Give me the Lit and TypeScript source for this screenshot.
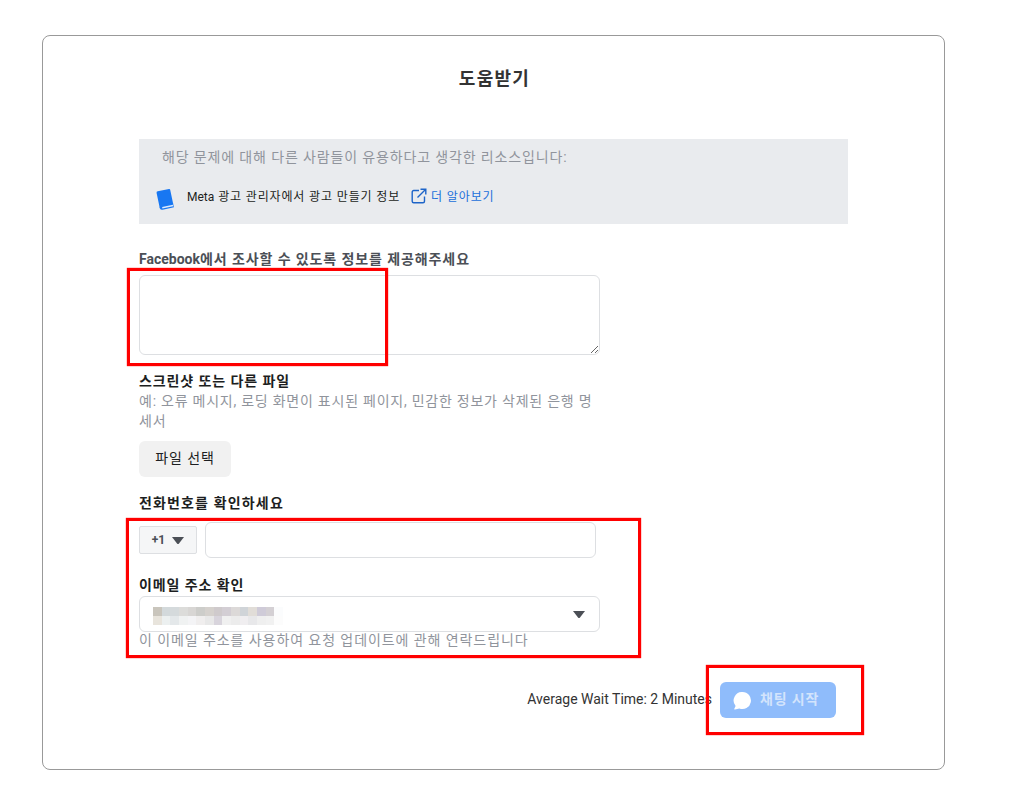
import { LitElement, html, css } from "lit";
import { customElement } from "lit/decorators.js";

const ROW1 = ["#c9c5bc","#d3d9db","#d5dadc","#dcdcda","#d8d6d4","#cdcdca","#d5d1cd","#cfcacc","#d3ced4","#dcd9d8","#d0d4d8","#e1ddd8","#cfcbd8","#d4d0d4","#fbfcfd"];
const ROW2 = ["#e8e4dc","#ecf0f0","#e4e8ea","#f0f2f2","#f4f4f6","#f0eeee","#e8e8e8","#d8d4dc","#f0f0f0","#ececec","#f0eef0","#e8e8ea","#efefef","#f1f1f1","#fcfcfc"];

@customElement("app-root")
export class AppRoot extends LitElement {
  static styles = css`
    :host {
      display: block;
      position: relative;
      min-height: 794px;
      box-sizing: border-box;
      padding: 35px 0 0 42px;
      font-family: Roboto, "Noto Sans CJK KR", sans-serif;
      letter-spacing: 0.86px;
      color: #1c1e21;
      background: #fff;
    }
    .lat { letter-spacing: 0; }
    .card {
      box-sizing: border-box;
      width: 903px;
      height: 735px;
      border: 1px solid #999;
      border-radius: 8px;
      padding: 30px 96px 0;
    }
    h1 {
      margin: 0;
      padding-left: 2px;
      font-size: 18px;
      line-height: 26px;
      font-weight: 700;
      letter-spacing: 1.3px;
      text-align: center;
      color: #333;
    }
    .panel {
      box-sizing: border-box;
      margin-top: 47px;
      height: 85px;
      width: 709px;
      background: #e9ebee;
      padding: 8px 18px 0 23px;
    }
    .panel-title { font-size: 14px; line-height: 20px; color: #90949c; }
    .resource {
      display: flex;
      align-items: center;
      margin: 16px 0 0 -7px;
      height: 24px;
      font-size: 12px;
      color: #1c1e21;
    }
    .book { width: 20px; height: 24px; margin: 7px 12px 0 0; flex: none; }
    .ext { width: 16px; height: 16px; margin: 1px 4px 0 11px; flex: none; }
    .link { color: #216fdb; }
    form { width: 461px; display: flex; flex-direction: column; align-items: flex-start; }
    label { display: block; font-size: 14px; line-height: 20px; font-weight: 700; letter-spacing: 0.9px; color: #1c1e21; }
    .first { margin-top: 25px; color: #4b4f56; }
    textarea {
      box-sizing: border-box;
      display: block;
      width: 461px;
      height: 80px;
      margin-top: 6px;
      border: 1px solid #dddfe2;
      border-radius: 6px;
      outline: none;
      background: #fff;
    }
    .second { margin-top: 16px; }
    .hint { font-size: 14px; line-height: 20px; color: #90949c; }
    .h1 { letter-spacing: 0.76px; }
    .h2 { margin-top: -2px; letter-spacing: 0.92px; }
    .file {
      box-sizing: border-box;
      margin-top: 10px;
      width: 92px;
      height: 36px;
      padding: 0 0 4px;
      border: 0;
      border-radius: 6px;
      background: #f1f1f1;
      font: inherit;
      letter-spacing: inherit;
      font-size: 14px;
      color: #1c1e21;
    }
    .third { margin-top: 16px; letter-spacing: 1.15px; }
    .phone { display: flex; align-items: center; gap: 8px; margin-top: 9px; }
    .cc {
      box-sizing: border-box;
      width: 58px;
      height: 28px;
      display: flex;
      align-items: center;
      justify-content: center;
      gap: 7px;
      letter-spacing: 0;
      background: #f5f6f7;
      border: 1px solid #dddfe2;
      border-radius: 2px;
      font-size: 12px;
      font-weight: 700;
      color: #4b4f56;
    }
    .caret { width: 12px; height: 7px; flex: none; }
    .tel {
      box-sizing: border-box;
      width: 391px;
      height: 36px;
      border: 1px solid #dddfe2;
      border-radius: 6px;
    }
    .fourth { margin-top: 17px; }
    .select {
      box-sizing: border-box;
      width: 461px;
      height: 36px;
      margin-top: 1px;
      border: 1px solid #dddfe2;
      border-radius: 6px;
      display: flex;
      align-items: center;
      justify-content: space-between;
      padding: 0 14px 0 13px;
    }
    .mosaic { display: grid; grid-template-columns: repeat(15, 8.67px); grid-auto-rows: 9px; margin-top: 4px; }
    .actions {
      display: flex;
      align-items: center;
      justify-content: flex-end;
      gap: 8px;
      width: 697px;
      margin-top: 32px;
      font-size: 14px;
      color: #333;
    }
    .wait { padding-bottom: 2px; }
    .chat {
      box-sizing: border-box;
      display: flex;
      align-items: center;
      gap: 9px;
      width: 116px;
      height: 36px;
      padding-left: 13px;
      border: 0;
      border-radius: 6px;
      background: #8fbcfb;
      color: #d3e4fc;
      font: inherit;
      letter-spacing: inherit;
      font-size: 14px;
      font-weight: 700;
    }
    .chat-label { padding-bottom: 4px; }
    .bubble { width: 18px; height: 18px; flex: none; margin-top: 1px; }
    .mark { position: absolute; box-sizing: border-box; border: 3px solid #f00; box-shadow: 0 0 1px #f00; pointer-events: none; }
    .m1 { left: 127px; top: 268px; width: 261px; height: 98px; }
    .m2 { left: 126px; top: 518px; width: 515px; height: 140px; }
    .m3 { left: 706px; top: 665px; width: 158px; height: 70px; }
  `;

  render() {
    const caret = html`<svg class="caret" viewBox="0 0 12 7"><path d="M0 0h12L7 6.4a1.3 1.3 0 0 1-2 0z" fill="#4b4f56"/></svg>`;
    return html`
      <div class="card">
        <h1>도움받기</h1>
        <div class="panel">
          <div class="panel-title">해당 문제에 대해 다른 사람들이 유용하다고 생각한 리소스입니다:</div>
          <div class="resource">
            <svg class="book" viewBox="0 0 20 24">
              <g transform="rotate(-12 10 12)">
                <path d="M3 4.5A1.5 1.5 0 0 1 4.5 3H16a1 1 0 0 1 1 1v14.5H5.5A2.5 2.5 0 0 0 3 20z" fill="#1877f2"/>
                <path d="M3 20a2.5 2.5 0 0 1 2.5-2.5H17V22H5.5A2.5 2.5 0 0 1 3 20z" fill="#1877f2"/>
                <path d="M5.5 19.3h11v1.4h-11z" fill="#dbe9fc"/>
              </g>
            </svg>
            <span><span class="lat">Meta</span> 광고 관리자에서 광고 만들기 정보</span>
            <svg class="ext" viewBox="0 0 16 16" fill="none" stroke="#1d64c8" stroke-width="1.4">
              <path d="M8 2.5H2.7a1.5 1.5 0 0 0-1.5 1.5v9.3a1.5 1.5 0 0 0 1.5 1.5H12a1.5 1.5 0 0 0 1.5-1.5V8.5"/>
              <path d="M6.5 9.5L14.5 1.5M9.5 1.2h5.3v5.3"/>
            </svg>
            <span class="link">더 알아보기</span>
          </div>
        </div>
        <form>
          <label class="first"><span class="lat">Facebook</span>에서 조사할 수 있도록 정보를 제공해주세요</label>
          <textarea></textarea>
          <label class="second">스크린샷 또는 다른 파일</label>
          <div class="hint h1">예: 오류 메시지, 로딩 화면이 표시된 페이지, 민감한 정보가 삭제된 은행 명세서</div>
          <button class="file" type="button">파일 선택</button>
          <label class="third">전화번호를 확인하세요</label>
          <div class="phone">
            <div class="cc">+1 ${caret}</div>
            <div class="tel"></div>
          </div>
          <label class="fourth">이메일 주소 확인</label>
          <div class="select">
            <div class="mosaic">
              ${[...ROW1, ...ROW2].map((c) => html`<i style="background:${c}"></i>`)}
            </div>
            ${caret}
          </div>
          <div class="hint h2">이 이메일 주소를 사용하여 요청 업데이트에 관해 연락드립니다</div>
        </form>
        <div class="actions">
          <span class="lat wait">Average Wait Time: 2 Minutes</span>
          <button class="chat" type="button">
            <svg class="bubble" viewBox="0 0 18 18"><path d="M9.5 0a8.5 8.5 0 1 1-3.2 16.4L2 17.6c-.6.1-.9-.4-.7-.9l1.3-2.8A8.5 8.5 0 0 1 9.5 0z" fill="#fff"/></svg>
            <span class="chat-label">채팅 시작</span>
          </button>
        </div>
      </div>
      <div class="mark m1"></div>
      <div class="mark m2"></div>
      <div class="mark m3"></div>
    `;
  }
}
